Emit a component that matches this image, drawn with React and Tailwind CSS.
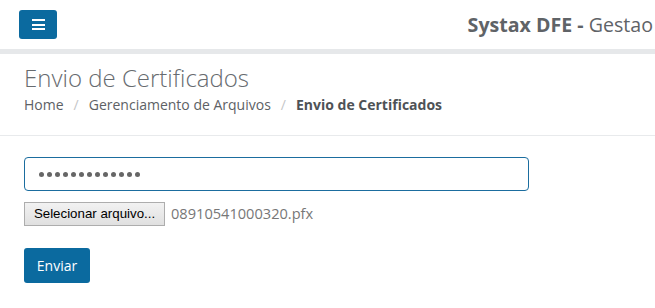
export default function App() {
  return (
    <div className="w-[655px] h-[308px] overflow-hidden bg-white" style={{ fontFamily: '"Open Sans", sans-serif' }}>
      <header className="h-[49px] flex items-center justify-between pl-[19px] pr-[2px]">
        <button className="w-[38px] h-[29px] rounded-[3px] bg-[#0b6a9f] flex flex-col items-center justify-center gap-[2.5px]">
          <span className="block w-[13px] h-[2px] bg-white"></span>
          <span className="block w-[13px] h-[2px] bg-white"></span>
          <span className="block w-[13px] h-[2px] bg-white"></span>
        </button>
        <div className="whitespace-nowrap text-[19.6px] text-[#5f6367] leading-none">
          <span className="font-bold">Systax DFE - </span>
          <span className="font-normal">Gestao</span>
        </div>
      </header>
      <div className="h-[5px] bg-[#e6e8ea]"></div>
      <div className="px-[24px] pt-[9px] pb-[20px] border-b border-[#e8eaec]">
        <h1 className="text-[24px] font-light text-[#676b6f] leading-[30px]">Envio de Certificados</h1>
        <nav className="mt-[2px] text-[14px] leading-[20px] text-[#5d6165] flex items-center">
          <span>Home</span>
          <span className="px-[10px] text-[#c4c6c8]">/</span>
          <span>Gerenciamento de Arquivos</span>
          <span className="px-[10px] text-[#c4c6c8]">/</span>
          <span className="font-bold text-[#4e5256]">Envio de Certificados</span>
        </nav>
      </div>
      <div className="px-[24px] pt-[21px]">
        <div className="w-[505px] h-[34px] border border-[#1b6d9f] rounded-[4px] flex items-center gap-[3px] pl-[14px]">
          {Array.from({ length: 13 }).map((_, i) => (
            <span key={i} className="block w-[5px] h-[5px] rounded-full bg-[#666]"></span>
          ))}
        </div>
        <div className="mt-[11px] flex items-center">
          <button className="h-[24px] w-[141px] border border-[#adadad] bg-gradient-to-b from-[#f2f2f2] to-[#e0e0e0] text-[13.3px] text-black" style={{ fontFamily: '"Liberation Sans", Arial, sans-serif' }}>
            Selecionar arquivo...
          </button>
          <span className="ml-[6px] text-[14.6px] text-[#777]">08910541000320.pfx</span>
        </div>
        <button className="mt-[22px] w-[66px] h-[35px] rounded-[3px] bg-[#0b6a9f] text-white text-[14px]">Enviar</button>
      </div>
    </div>
  );
}
